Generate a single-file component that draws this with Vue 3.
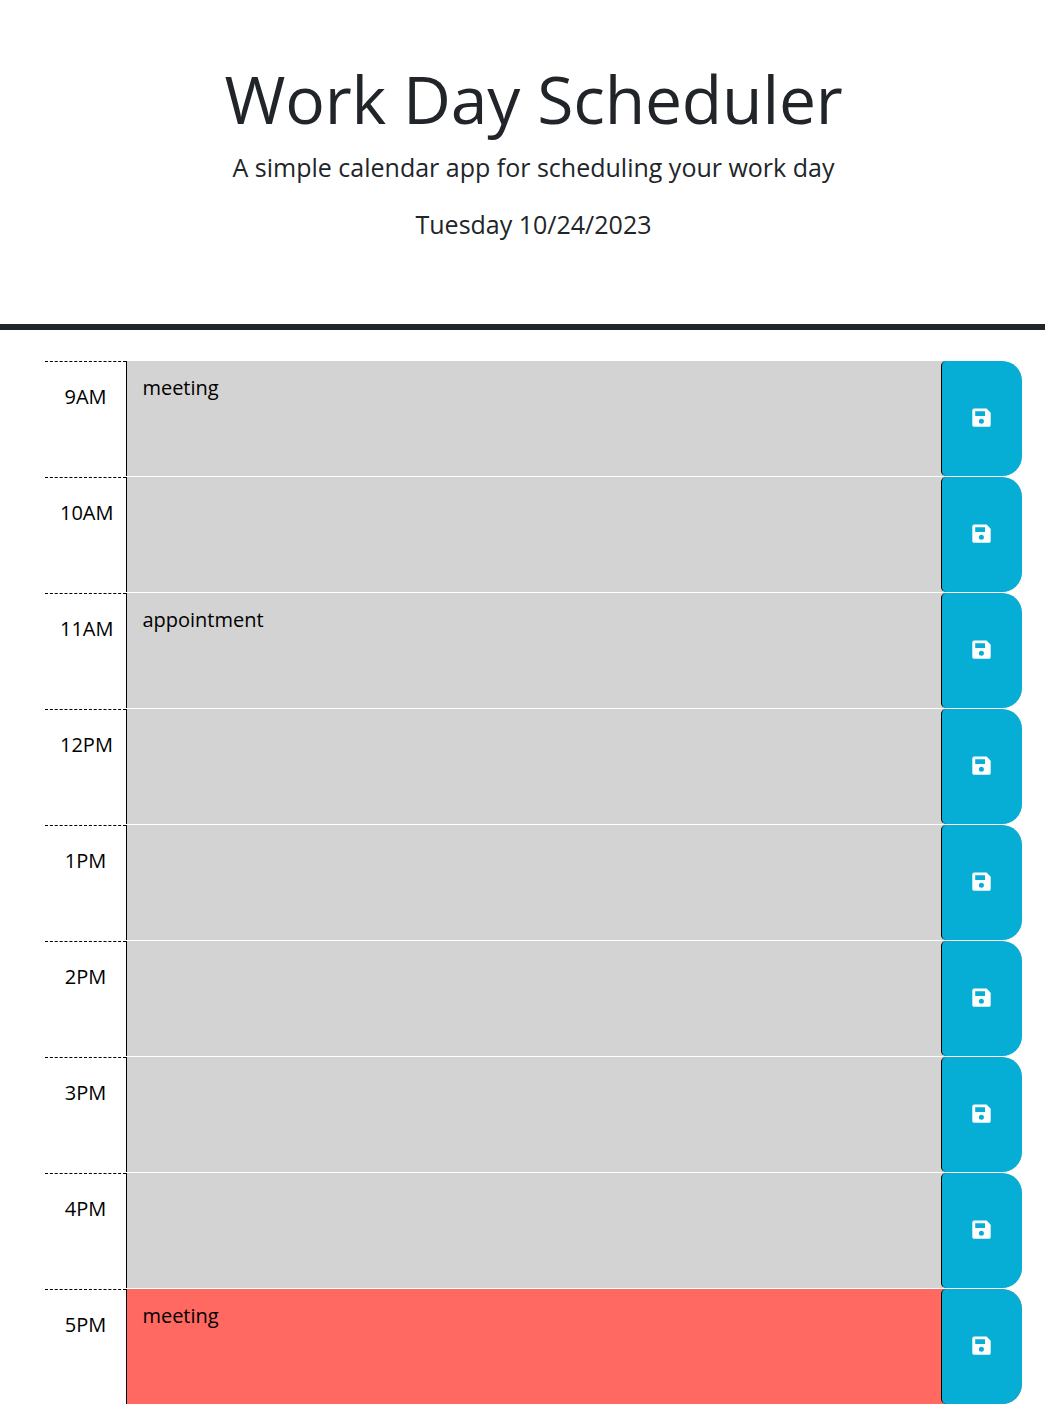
<script setup>
const blocks = [
  { hour: '9AM', text: 'meeting', state: 'past' },
  { hour: '10AM', text: '', state: 'past' },
  { hour: '11AM', text: 'appointment', state: 'past' },
  { hour: '12PM', text: '', state: 'past' },
  { hour: '1PM', text: '', state: 'past' },
  { hour: '2PM', text: '', state: 'past' },
  { hour: '3PM', text: '', state: 'past' },
  { hour: '4PM', text: '', state: 'past' },
  { hour: '5PM', text: 'meeting', state: 'present' },
]
</script>

<template>
  <div class="page">
    <header class="header">
      <h1>Work Day Scheduler</h1>
      <p class="lead">A simple calendar app for scheduling your work day</p>
      <p class="lead">Tuesday 10/24/2023</p>
    </header>
    <main class="schedule">
      <div v-for="b in blocks" :key="b.hour" class="row" :class="b.state">
        <div class="hour">{{ b.hour }}</div>
        <div class="description">{{ b.text }}</div>
        <button class="save" aria-label="save">
          <svg width="20" height="20" viewBox="0 0 20 20">
            <path fill="#fff" fill-rule="evenodd" d="M2.200 .6H14.600L18.700 4.700V16.900Q18.700 18.800 16.800 18.800H2.200Q.3 18.800 .3 16.900V2.500Q.3 .6 2.200 .6ZM3.200 3.300V8H13V3.300ZM9.400 10.800A2.500 2.500 0 1 0 9.400 15.800A2.500 2.500 0 1 0 9.400 10.800Z" />
          </svg>
        </button>
      </div>
    </main>
  </div>
</template>

<style>
body { margin: 0; background: #fff; }
</style>

<style scoped>
.page {
  height: 1404px;
  overflow: hidden;
  font-family: "Open Sans", sans-serif;
  font-size: 20px;
  line-height: 30px;
  color: #000;
}
.header {
  box-sizing: border-box;
  height: 330px;
  padding: 58px 0 0 22px;
  border-bottom: 6px solid #212529;
  text-align: center;
  color: #212529;
}
h1 {
  margin: 0 0 11px;
  font-size: 66px;
  font-weight: 400;
  line-height: 80px;
  letter-spacing: -0.16px;
}
.lead { margin: 0 0 20px; font-size: 25px; line-height: 37px; }
.schedule { padding: 31px 23px 0 45px; }
.row {
  display: flex;
  height: 115px;
  margin-bottom: 1px;
  border-radius: 0 20px 20px 0;
}
.hour {
  box-sizing: border-box;
  width: 81px;
  padding: 20px 15px 0;
  border-top: 1px dashed #000;
  background: #fff;
  text-align: center;
}
.description {
  box-sizing: border-box;
  width: 815px;
  padding: 12px 15.4px;
  border-left: 1px solid #000;
}
.past { background: #d3d3d3; }
.present { background: #ff6961; }
.save {
  display: flex;
  align-items: center;
  justify-content: center;
  box-sizing: border-box;
  width: 81px;
  padding: 0 0 1px;
  border: 0;
  border-left: 1px solid #000;
  border-radius: 5px 20px 20px 5px;
  background: #06aed5;
}
</style>
